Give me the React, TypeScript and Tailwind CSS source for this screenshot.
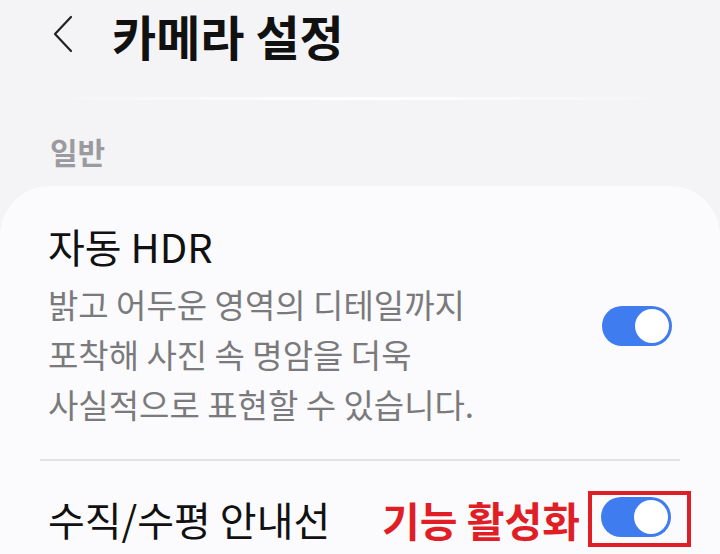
import { FC } from 'react';

const Toggle: FC = () => (
  <div className="w-[70px] h-[40px] rounded-full bg-[#3e7cf0] flex items-center justify-end pr-[3px]">
    <div className="w-[34px] h-[34px] rounded-full bg-white" />
  </div>
);

const App: FC = () => {
  return (
    <div
      className="w-[720px] h-[554px] overflow-hidden bg-[#f4f4f6] text-[#111] flex flex-col"
      style={{ fontFamily: '"Noto Sans CJK KR", "Noto Sans", sans-serif' }}
    >
      {/* header */}
      <div className="flex items-center h-[70px] pl-[52px] shrink-0">
        <svg width="22" height="38" viewBox="0 0 22 38" fill="none" className="-mt-[2px]">
          <path d="M19 2 L3 19 L19 36" stroke="#222" strokeWidth="2.2" strokeLinecap="round" strokeLinejoin="round" />
        </svg>
        <h1 className="ml-[38px] text-[48px] font-bold leading-[70px]">카메라 설정</h1>
      </div>

      <div className="mt-[27px] mx-[40px] h-[3px] shrink-0 bg-gradient-to-r from-transparent via-white to-transparent" />

      <div className="pl-[50px] mt-[31px] text-[30px] font-bold text-[#9b9b9f] leading-[40px] shrink-0">일반</div>

      {/* card */}
      <div className="mt-[15px] flex-1 bg-[#fbfbfd] rounded-t-[50px] pt-[36px]">
        <div className="flex items-center pl-[48px] pr-[48px]">
          <div className="flex-1">
            <div className="text-[40px] leading-[48px]">자동 HDR</div>
            <div className="mt-[9px] text-[33px] leading-[50px] text-[#7a7a7c]">
              밝고 어두운 영역의 디테일까지
              <br />
              포착해 사진 속 명암을 더욱
              <br />
              사실적으로 표현할 수 있습니다.
            </div>
          </div>
          <Toggle />
        </div>

        <div className="mt-[30px] mx-[40px] h-[2px] bg-[#e3e3e5]" />

        <div className="flex items-center pl-[48px] pr-[29px] h-[116px]">
          <div className="flex-1 text-[40px] leading-[48px]">수직/수평 안내선</div>
          <span className="text-[41px] font-bold text-[#e01e25] leading-[52px] mr-[8px]">기능 활성화</span>
          <div className="border-[4px] border-[#e01e25] pl-[9px] pr-[16px] pt-[2px] pb-[6px]">
            <Toggle />
          </div>
        </div>
      </div>
    </div>
  );
};

export default App;
